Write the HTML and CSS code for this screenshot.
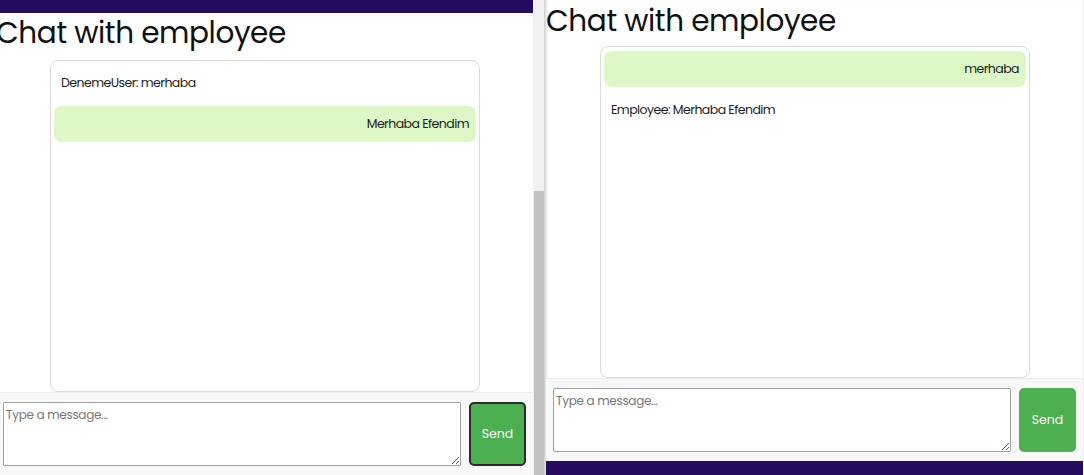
FILE: index.html
```html
<!DOCTYPE html>
<html>
<head>
<meta charset="utf-8">
<link rel="stylesheet" href="styles.css">
</head>
<body>
<div class="screen">
  <div class="pane pane-left">
    <div class="page page-left">
      <div class="topbar"></div>
      <h1 class="title">Chat with employee</h1>
      <div class="chatbox">
        <div class="msg msg-in">DenemeUser: merhaba</div>
        <div class="msg msg-out">Merhaba Efendim</div>
      </div>
      <div class="composer">
        <textarea class="input" placeholder="Type a message..."></textarea>
        <button class="send send-focus">Send</button>
      </div>
      <div class="footer"></div>
    </div>
  </div>
  <div class="scrollbar"><div class="thumb"></div></div>
  <div class="divider"></div>
  <div class="pane pane-right">
    <div class="page">
      <h1 class="title title-right">Chat with employee</h1>
      <div class="chatbox">
        <div class="msg msg-out">merhaba</div>
        <div class="msg msg-in">Employee: Merhaba Efendim</div>
      </div>
      <div class="composer">
        <textarea class="input" placeholder="Type a message..."></textarea>
        <button class="send">Send</button>
      </div>
      <div class="footer"></div>
    </div>
  </div>
</div>
</body>
</html>
```
FILE: styles.css
```css
* { box-sizing: border-box; }
html, body { margin: 0; padding: 0; background: #fff; }
body {
  font-family: "Poppins", "Inter", "DejaVu Sans", sans-serif;
  color: #222;
  width: 1084px;
  height: 475px;
  overflow: hidden;
}
.screen {
  display: flex;
  width: 1084px;
  height: 475px;
}
.pane {
  height: 475px;
  overflow: hidden;
  background: #fff;
}
.pane-left { width: 533px; }
.pane-right {
  width: 538px;
  border-right: 1px solid #ececec;
  box-shadow: inset 3px 0 3px -2px rgba(0,0,0,0.10);
}
.page {
  width: 538px;
  height: 475px;
  display: flex;
  flex-direction: column;
}
.page-left { margin-left: -4px; }
.topbar {
  height: 13px;
  background: #240b5f;
  flex: none;
}
.title {
  margin: 0;
  height: 47px;
  padding-top: 0;
  font-weight: 400;
  font-size: 29.5px;
  line-height: 40px;
  color: #111;
  letter-spacing: -0.4px;
  flex: none;
}
.title-right { margin-top: -11px; height: 57px; line-height: 64px; }
.chatbox {
  width: 430px;
  height: 332px;
  margin: 0 auto;
  border: 1px solid #dcdcdc;
  border-radius: 8px;
  padding: 4px 3px;
  display: flex;
  flex-direction: column;
  gap: 5px;
  background: #fff;
  flex: none;
}
.msg {
  height: 36px;
  padding: 0 7px;
  font-size: 12.5px;
  letter-spacing: -0.55px;
  line-height: 36px;
  color: #1c1c1c;
  border-radius: 8px;
}
.msg-out {
  background: #dcf8c6;
  text-align: right;
}
.composer {
  display: flex;
  gap: 8px;
  padding: 9px 8px 9px 7px;
  background: #f8f8f8;
  border-top: 1px solid #ededed;
  flex: none;
}
.input {
  width: 458px;
  height: 64px;
  border: 1px solid #a2a2a2;
  border-radius: 1px;
  padding: 3px 2px;
  font-family: "Poppins", "Inter", sans-serif;
  font-size: 12px;
  letter-spacing: -0.3px;
  resize: vertical;
  background: #fff;
  margin: 0;
}
.input::placeholder { color: #777; }
.send {
  width: 57px;
  height: 64px;
  background: #4caf50;
  color: #fff;
  border: none;
  border-radius: 5px;
  font-family: "Poppins", "Inter", sans-serif;
  font-size: 12.5px;
  padding: 0;
  margin: 0;
}
.send-focus {
  border: 2px solid #2b2b2b;
}
.footer {
  flex: 1;
  background: #240b5f;
}
.scrollbar {
  width: 11px;
  height: 475px;
  background: #f0f0f0;
  display: flex;
  flex-direction: column;
  justify-content: flex-end;
  padding: 0 0 0 1px;
}
.thumb {
  height: 284px;
  width: 10px;
  background: #c1c1c1;
}
.divider {
  width: 2px;
  height: 475px;
  background: linear-gradient(to right, #cdcdcd, #e4e4e4);
}
```
